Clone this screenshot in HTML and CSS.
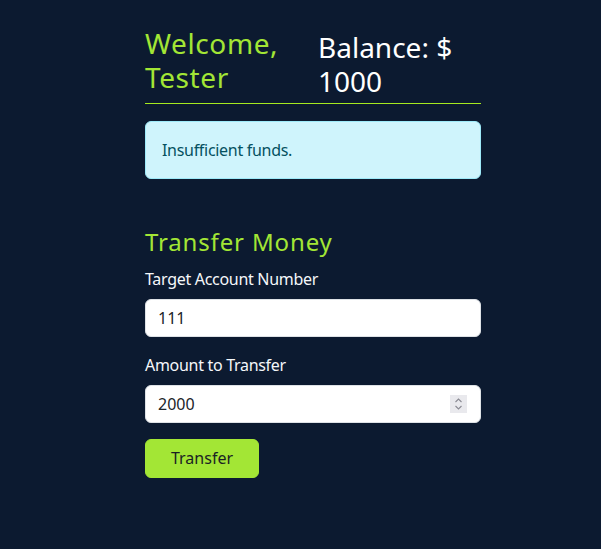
FILE: index.html
```html
<!DOCTYPE html>
<html lang="en">
<head>
<meta charset="utf-8">
<title>Bank</title>
<link rel="stylesheet" href="styles.css">
</head>
<body>
<main class="page">
  <header class="top">
    <h3 class="welcome">Welcome, Tester</h3>
    <h3 class="balance">Balance: $ 1000</h3>
  </header>
  <div class="alert">Insufficient funds.</div>
  <section class="transfer">
    <h4 class="transfer-title">Transfer Money</h4>
    <label class="field-label" for="target">Target Account Number</label>
    <input class="field" id="target" type="text" value="111">
    <label class="field-label" for="amount">Amount to Transfer</label>
    <div class="field number-field">
      <span class="number-value">2000</span>
      <span class="spin">
        <svg width="9" height="14" viewBox="0 0 9 14"><path d="M1.5 5 L4.5 2 L7.5 5" fill="none" stroke="#8a8a93" stroke-width="1.1"/><path d="M1.5 9 L4.5 12 L7.5 9" fill="none" stroke="#8a8a93" stroke-width="1.1"/></svg>
      </span>
    </div>
    <button class="btn" type="button">Transfer</button>
  </section>
</main>
</body>
</html>
```
FILE: styles.css
```css
* { box-sizing: border-box; }
html, body {
  margin: 0;
  background: #0c1a30;
  font-family: "Noto Sans", "Open Sans", sans-serif;
  color: #f5f7fa;
}
.page {
  width: 336px;
  margin-left: 145px;
  padding-top: 27px;
}
.top {
  display: grid;
  grid-template-columns: 173px 1fr;
  align-items: start;
  padding-bottom: 5px;
  border-bottom: 1px solid #a6ea1f;
}
.welcome, .balance {
  margin: 0;
  font-size: 28px;
  font-weight: 400;
  line-height: 1.2;
}
.welcome {
  color: #a3e635;
  letter-spacing: 0.6px;
}
.balance {
  color: #ffffff;
  margin-top: 3px;
  line-height: 34px;
}
.alert {
  margin-top: 17px;
  padding: 16px;
  border: 1px solid #9eeaf9;
  border-radius: 6px;
  background: #cff4fc;
  color: #055160;
  font-size: 16px;
  line-height: 24px;
  letter-spacing: -0.3px;
}
.transfer {
  display: flex;
  flex-direction: column;
  align-items: flex-start;
  padding-top: 49px;
}
.transfer-title {
  margin: 0 0 10px;
  font-size: 24px;
  font-weight: 400;
  line-height: 1.2;
  letter-spacing: 0.85px;
  color: #a3e635;
}
.field-label {
  font-size: 16px;
  line-height: 24px;
  letter-spacing: -0.3px;
  margin-bottom: 8px;
}
.field {
  width: 100%;
  height: 38px;
  margin: 0 0 16px;
  padding: 6px 12px;
  border: 1px solid #dee2e6;
  border-radius: 6px;
  background: #ffffff;
  color: #212529;
  font-family: inherit;
  font-size: 16px;
  line-height: 24px;
  outline: none;
}
.number-field {
  display: flex;
  align-items: center;
  justify-content: space-between;
  padding-right: 13px;
}
.spin {
  display: flex;
  align-items: center;
  justify-content: center;
  width: 17px;
  height: 18px;
  background: #e9e9ed;
}
.btn {
  width: 114px;
  height: 39px;
  border: 1px solid #a3e635;
  border-radius: 6px;
  background: #a3e635;
  color: #1b1f24;
  font-family: inherit;
  font-size: 16px;
  line-height: 24px;
  padding: 0;
}
```
